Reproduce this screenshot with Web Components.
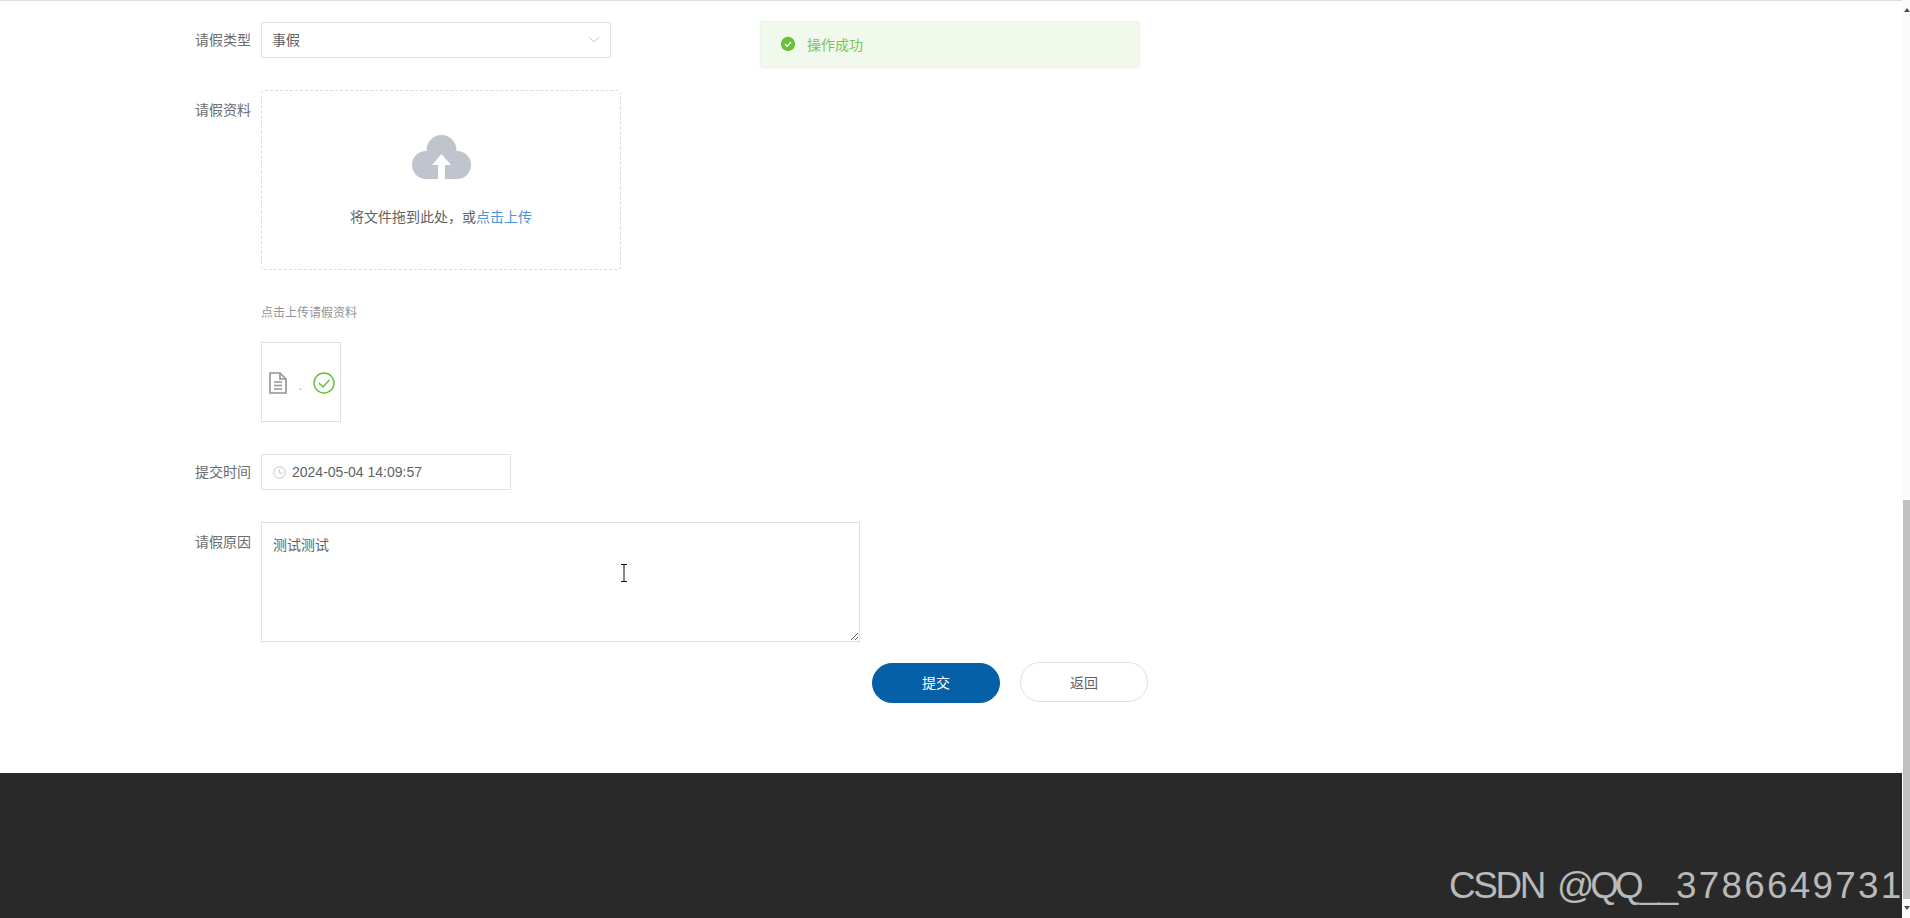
<!DOCTYPE html>
<html lang="zh">
<head>
<meta charset="utf-8">
<title>请假</title>
<style>
  html, body { margin: 0; height: 100%; overflow: hidden; background: #fff; }
  body { font: 14px "Liberation Sans", "Noto Sans CJK SC", sans-serif; color: #606266; }
</style>
</head>
<body>
<leave-page>
  <leave-message>操作成功</leave-message>
  <form-item label="请假类型"><leave-select>事假</leave-select></form-item>
  <form-item label="请假资料" style="margin-top:32px" offset>
    <leave-upload>将文件拖到此处，或<em slot="action">点击上传</em></leave-upload>
  </form-item>
  <form-item style="margin-top:33px"><upload-tip>点击上传请假资料</upload-tip></form-item>
  <form-item style="margin-top:19px"><file-card>.</file-card></form-item>
  <form-item label="提交时间" style="margin-top:32px"><date-box>2024-05-04 14:09:57</date-box></form-item>
  <form-item label="请假原因" style="margin-top:32px" offset><reason-box>测试测试</reason-box></form-item>
  <form-actions>
    <pill-button primary>提交</pill-button>
    <pill-button>返回</pill-button>
  </form-actions>
</leave-page>

<script>
(function () {
  const define = (name, html, attrs) => {
    customElements.define(name, class extends HTMLElement {
      constructor() {
        super();
        this.attachShadow({mode: 'open'}).innerHTML = html;
      }
      connectedCallback() {
        if (attrs) attrs(this);
      }
    });
  };

  define('leave-page', `
  <style>
  :host { display: flex; height: 918px; position: relative; overflow: hidden; }
  .main { width: 1902px; display: flex; flex-direction: column; }
  .content {
    flex: 1;
    border-top: 1px solid #ddd;
    padding: 21px 0 0 171px;
    position: relative;
  }
  .footer { height: 145px; background: #292929; }
  .watermark {
    position: absolute;
    left: 1449px;
    top: 866px;
    font: 36.8px/40px "Liberation Sans", sans-serif;
    color: #b9b9b9;
    white-space: nowrap;
    letter-spacing: -2.3px;
    word-spacing: 5px;
  }
  .at { letter-spacing: -4px; }
  .digits { letter-spacing: 2.3px; }
  .cursor { position: absolute; left: 619px; top: 564px; }
  .bar { width: 8px; background: #fafafa; position: relative; }
  .thumb {
    position: absolute;
    left: 1px;
    right: 0;
    top: 500px;
    height: 399px;
    background: #c1c1c1;
  }
  .arrow { position: absolute; left: 2px; }
  </style>
  <div class="main">
    <div class="content"><slot></slot></div>
    <div class="footer"></div>
  </div>
  <div class="bar">
    <svg class="arrow" style="top:8px" width="6" height="5"><path d="M3 0 6 4H0z" fill="#505050"/></svg>
    <div class="thumb"></div>
    <svg class="arrow" style="top:906px" width="6" height="5"><path d="M0 0H6L3 4z" fill="#505050"/></svg>
  </div>
  <span class="watermark">CSDN <span class="at">@QQ</span>__<span class="digits">3786649731</span></span>
  <svg class="cursor" width="10" height="18" fill="none" stroke="#111" stroke-width="1">
    <path d="M2 .5H8M5 .5V17M2 17.5H8"/>
  </svg>`);

  define('form-item', `
  <style>
  :host { display: flex; }
  .label {
    width: 80px;
    padding-right: 10px;
    text-align: right;
    line-height: 36px;
    color: #6a6c70;
    flex: none;
  }
  :host([offset]) .label { padding-top: 2px; }
  </style>
  <div class="label"></div>
  <slot></slot>`, (el) => {
    el.shadowRoot.querySelector('.label').textContent = el.getAttribute('label') || '';
  });

  define('leave-select', `
  <style>
  :host {
    display: flex;
    align-items: center;
    justify-content: space-between;
    box-sizing: border-box;
    width: 350px;
    height: 36px;
    padding: 0 10px 2px 10px;
    border: 1px solid #dcdfe6;
    border-radius: 1px;
    color: #606266;
  }
  svg { margin-top: 1px; }
  </style>
  <span><slot></slot></span>
  <svg width="12" height="7" viewBox="0 0 12 7" fill="none" stroke="#c0c4cc"><path d="M1 1 6 6 11 1"/></svg>`);

  define('leave-upload', `
  <style>
  :host {
    display: flex;
    flex-direction: column;
    align-items: center;
    box-sizing: border-box;
    width: 360px;
    height: 180px;
    padding-top: 44px;
    border: 1px dashed #dcdcdc;
    border-radius: 4px;
    color: #606266;
  }
  .text { margin-top: 28px; line-height: 20px; }
  ::slotted(em) { color: #4a94d8; font-style: normal; }
  </style>
  <svg width="59" height="44" viewBox="0 0 59 44">
    <g fill="#c0c4cc">
      <circle cx="14" cy="30" r="14"/>
      <circle cx="45" cy="30" r="14"/>
      <circle cx="29.5" cy="15" r="15"/>
      <rect x="14" y="20" width="31" height="24"/>
    </g>
    <path d="M29.5 19 39 30H33V44H26V30H20z" fill="#fff"/>
  </svg>
  <div class="text"><slot></slot><slot name="action"></slot></div>`);

  define('upload-tip', `
  <style>
  :host { display: block; font-size: 12px; line-height: 20px; color: #909399; }
  </style>
  <slot></slot>`);

  define('file-card', `
  <style>
  :host {
    display: flex;
    align-items: center;
    box-sizing: border-box;
    width: 80px;
    height: 80px;
    padding: 1px 0 0 6px;
    border: 1px solid #dcdfe6;
    color: #909399;
  }
  .name { width: 25px; text-align: center; font-size: 12px; margin-top: 6px; }
  </style>
  <svg width="20" height="24" viewBox="0 0 20 24" fill="none" stroke="#909399" stroke-width="1.6">
    <path d="M2 2H12L18 8V22H2z"/><path d="M12 2V8H18M6 11H14M6 14.5H14M6 18H14"/>
  </svg>
  <span class="name"><slot></slot></span>
  <svg width="22" height="22" viewBox="0 0 22 22" fill="none" stroke="#67c23a" stroke-width="1.5">
    <circle cx="11" cy="11" r="10"/><path d="M6 11 10 15 16.5 8"/>
  </svg>`);

  define('date-box', `
  <style>
  :host {
    display: flex;
    align-items: center;
    gap: 6px;
    box-sizing: border-box;
    width: 250px;
    height: 36px;
    padding-left: 11px;
    border: 1px solid #dcdfe6;
    border-radius: 1px;
    color: #606266;
  }
  </style>
  <svg width="13" height="13" viewBox="0 0 13 13" fill="none" stroke="#c0c4cc">
    <circle cx="6.5" cy="6.5" r="5.7"/><path d="M6.5 3.5V7H9.5"/>
  </svg>
  <slot></slot>`);

  define('reason-box', `
  <style>
  :host { display: block; }
  textarea {
    display: block;
    box-sizing: border-box;
    width: 599px;
    height: 120px;
    margin: 0;
    padding: 12px 11px;
    border: 1px solid #dcdfe6;
    border-radius: 0;
    outline: none;
    font: 14px/20px "Liberation Sans", "Noto Sans CJK SC", sans-serif;
    color: #606266;
  }
  </style>
  <textarea></textarea>`, (el) => {
    el.shadowRoot.querySelector('textarea').textContent = el.textContent;
  });

  define('form-actions', `
  <style>
  :host { display: flex; gap: 20px; margin: 20px 0 0 701px; align-items: flex-start; }
  </style>
  <slot></slot>`);

  define('pill-button', `
  <style>
  :host {
    display: flex;
    align-items: center;
    justify-content: center;
    box-sizing: border-box;
    width: 128px;
    height: 40px;
    border: 1px solid #dcdfe6;
    border-radius: 20px;
    background: #fff;
    color: #606266;
  }
  :host([primary]) {
    background: #0560a8;
    border-color: #0560a8;
    color: #fff;
    margin-top: 1px;
    padding-bottom: 2px;
  }
  </style>
  <slot></slot>`);

  define('leave-message', `
  <style>
  :host {
    position: absolute;
    left: 760px;
    top: 20px;
    display: flex;
    align-items: center;
    gap: 11px;
    box-sizing: border-box;
    width: 380px;
    height: 47px;
    padding: 0 0 1px 19px;
    border: 1px solid #ebf5e5;
    border-radius: 3px;
    background: #f0f9eb;
    color: #7cc45a;
    box-shadow: 0 1px 4px rgba(0,0,0,.04);
  }
  </style>
  <svg width="16" height="16" viewBox="0 0 16 16">
    <circle cx="8" cy="8" r="7.2" fill="#67c23a"/>
    <path d="M5 8 7.2 10.2 11 6" fill="none" stroke="#fff" stroke-width="1.4"/>
  </svg>
  <slot></slot>`);
})();
</script>
</body>
</html>
